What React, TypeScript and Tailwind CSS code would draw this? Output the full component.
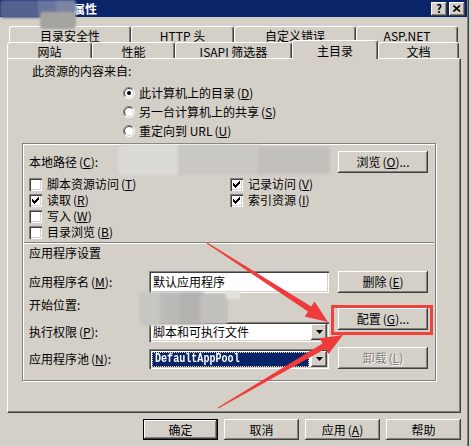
import React from "react";

const raised =
  "bg-[#d4d0c8] shadow-[inset_-1px_-1px_0_#404040,inset_1px_1px_0_#ffffff,inset_-2px_-2px_0_#808080]";
const sunken =
  "shadow-[inset_1px_1px_0_#808080,inset_2px_2px_0_#404040,inset_-1px_-1px_0_#ffffff,inset_-2px_-2px_0_#d4d0c8]";
const grayText = "text-[#808080] [text-shadow:1px_1px_0_#ffffff]";

function Key({ k }: { k: string }) {
  return (
    <span className="ml-[2px]">
      (<span className="underline underline-offset-1">{k}</span>)
    </span>
  );
}

function Btn({ children, className = "", disabled = false }: { children: React.ReactNode; className?: string; disabled?: boolean }) {
  return (
    <div className={`flex items-center justify-center shrink-0 ${raised} ${disabled ? grayText : "text-black"} ${className}`}>
      {children}
    </div>
  );
}

function Tab({ label, w, active = false }: { label: React.ReactNode; w: string; active?: boolean }) {
  return (
    <div
      className={`${w} ${active ? "h-[19px] -mb-px relative z-10 bg-[#d4d0c8]" : "h-[16px]"} shrink-0 flex items-center justify-center pt-[2px] border-l border-t border-r border-l-white border-t-white border-r-[#404040] rounded-t-[3px] shadow-[inset_-1px_0_0_#808080]`}
    >
      {label}
    </div>
  );
}

function Radio({ checked = false }: { checked?: boolean }) {
  return (
    <svg width="12" height="12" viewBox="0 0 12 12" className="shrink-0">
      <circle cx="6" cy="6" r="5.5" fill="#ffffff" />
      <path d="M9.9 2.1 A5.5 5.5 0 0 0 2.1 9.9" stroke="#808080" fill="none" />
      <path d="M9.2 2.8 A4.5 4.5 0 0 0 2.8 9.2" stroke="#404040" fill="none" />
      <path d="M2.1 9.9 A5.5 5.5 0 0 0 9.9 2.1" stroke="#ffffff" fill="none" />
      <path d="M2.8 9.2 A4.5 4.5 0 0 0 9.2 2.8" stroke="#d4d0c8" fill="none" />
      {checked && <circle cx="6" cy="6" r="2" fill="#000000" />}
    </svg>
  );
}

function Check({ checked = false, label }: { checked?: boolean; label: React.ReactNode }) {
  return (
    <div className="flex items-center h-[16px] gap-[5px]">
      <div className={`w-[13px] h-[13px] bg-white shrink-0 flex items-center justify-center ${sunken}`}>
        {checked && (
          <svg width="7" height="7" viewBox="0 0 7 7" shapeRendering="crispEdges">
            <polygon points="0,2 2,4 7,-1 7,2 2,7 0,5" fill="#000000" />
          </svg>
        )}
      </div>
      <span>{label}</span>
    </div>
  );
}

function Combo({ children }: { children: React.ReactNode }) {
  return (
    <div className={`w-[180px] h-[20px] bg-white flex items-center p-[2px] ${sunken}`}>
      <div className="flex-1 h-full flex items-center min-w-0">{children}</div>
      <div className={`w-[16px] h-[16px] flex items-center justify-center ${raised}`}>
        <svg width="7" height="4" viewBox="0 0 7 4">
          <polygon points="0,0 7,0 3.5,4" fill="#000000" />
        </svg>
      </div>
    </div>
  );
}

export default function App() {
  return (
    <div className="relative w-[471px] h-[446px] overflow-hidden bg-[#d4d0c8] flex text-[12px] leading-[14px] text-black font-['Noto_Sans_CJK_SC',sans-serif]">
      <div className="w-[467px] flex flex-col shrink-0">
        {/* title bar */}
        <div className="h-[17px] bg-[#0a246a] flex items-center pr-[2px]">
          <span className="ml-[73px] text-white font-bold">属性</span>
          <div className="ml-auto flex gap-[2px]">
            <div className={`w-[16px] h-[14px] flex items-center justify-center font-bold text-[11px] leading-none ${raised}`}>?</div>
            <div className={`w-[16px] h-[14px] flex items-center justify-center ${raised}`}>
              <svg width="8" height="7" viewBox="0 0 8 7">
                <path d="M0.5 0.5 L7 6.5 M7 0.5 L0.5 6.5" stroke="#000000" strokeWidth="1.6" />
              </svg>
            </div>
          </div>
        </div>

        {/* tabs */}
        <div className="mt-[9px] flex h-[16px] pl-[9px]">
          <Tab w="w-[122px]" label="目录安全性" />
          <Tab w="w-[103px]" label="HTTP 头" />
          <Tab w="w-[122px]" label="自定义错误" />
          <Tab w="w-[102px]" label="ASP.NET" />
        </div>
        <div className="flex items-end h-[16px] pl-[7px]">
          <Tab w="w-[85px]" label="网站" />
          <Tab w="w-[83px]" label="性能" />
          <Tab w="w-[117px]" label="ISAPI 筛选器" />
          <Tab w="w-[86px]" label="主目录" active />
          <Tab w="w-[81px]" label="文档" />
        </div>

        {/* panel */}
        <div className="ml-[7px] w-[454px] h-[355px] border-l border-t border-r border-b border-l-white border-t-white border-r-[#404040] border-b-[#404040] shadow-[inset_-1px_-1px_0_#808080] flex flex-col">
          <div className="mt-[5px] ml-[24px] h-[14px]">此资源的内容来自:</div>

          <div className="mt-[5px] ml-[115px] flex flex-col">
            <div className="h-[19px] flex items-center gap-[4px]">
              <Radio checked />
              <span>此计算机上的目录<Key k="D" /></span>
            </div>
            <div className="h-[19px] flex items-center gap-[4px]">
              <Radio />
              <span>另一台计算机上的共享<Key k="S" /></span>
            </div>
            <div className="h-[19px] flex items-center gap-[4px]">
              <Radio />
              <span>重定向到 URL<Key k="U" /></span>
            </div>
          </div>

          {/* group frame */}
          <div className="ml-[14px] mt-[3px] w-[414px] h-[238px] border border-[#808080] shadow-[1px_1px_0_#ffffff,inset_1px_1px_0_#ffffff] flex flex-col">
            <div className="mt-[7px] h-[22px] flex items-center justify-between pl-[6px] pr-[7px]">
              <span>本地路径<Key k="C" />:</span>
              <Btn className="w-[90px] h-[22px]">浏览<Key k="O" />...</Btn>
            </div>

            <div className="mt-[3px] pl-[6px] grid grid-cols-[201px_1fr]">
              <Check label={<>脚本资源访问<Key k="T" /></>} />
              <Check checked label={<>记录访问<Key k="V" /></>} />
              <Check checked label={<>读取<Key k="R" /></>} />
              <Check checked label={<>索引资源<Key k="I" /></>} />
              <Check label={<>写入<Key k="W" /></>} />
              <div />
              <Check label={<>目录浏览<Key k="B" /></>} />
              <div />
            </div>

            <div className="mt-[2px] mx-[1px] h-[2px] border-t border-b border-t-[#808080] border-b-white" />

            <div className="mt-[2px] h-[14px] pl-[6px]">应用程序设置</div>

            <div className="mt-[11px] pl-[6px] flex">
              <div className="flex flex-col">
                <div className="h-[22px] flex items-center">
                  <span className="w-[120px]">应用程序名<Key k="M" />:</span>
                  <div className={`w-[180px] h-[22px] bg-white flex items-center pl-[4px] ${sunken}`}>默认应用程序</div>
                </div>
                <div className="mt-[1px] h-[22px] flex items-center">
                  <span className="w-[120px]">开始位置:</span>
                </div>
                <div className="mt-[6px] h-[20px] flex items-center">
                  <span className="w-[120px]">执行权限<Key k="P" />:</span>
                  <Combo>
                    <span className="pl-[2px]">脚本和可执行文件</span>
                  </Combo>
                </div>
                <div className="mt-[7px] h-[20px] flex items-center">
                  <span className="w-[120px]">应用程序池<Key k="N" />:</span>
                  <Combo>
                    <div className="ml-px mr-[2px] flex-1 h-[15px] bg-[#0a246a] border border-dotted border-[#e8dc9a] flex items-center pl-[2px] text-white font-bold text-[12px] leading-none font-['Liberation_Mono',monospace] overflow-hidden">
                      <span className="inline-block origin-left scale-x-[0.84]">DefaultAppPool</span>
                    </div>
                  </Combo>
                </div>
              </div>

              <div className="ml-[9px] flex flex-col">
                <Btn className="w-[90px] h-[22px]">删除<Key k="E" /></Btn>
                <Btn className="mt-[15px] w-[90px] h-[22px]">配置<Key k="G" />...</Btn>
                <Btn disabled className="mt-[17px] w-[90px] h-[22px]">卸载<Key k="L" /></Btn>
              </div>
            </div>
          </div>
        </div>

        {/* dialog buttons */}
        <div className="mt-[6px] ml-[143px] flex gap-[6px]">
          <Btn className="w-[75px] h-[21px] border border-black">确定</Btn>
          <Btn className="w-[75px] h-[21px]">取消</Btn>
          <Btn className="w-[75px] h-[21px]">应用<Key k="A" /></Btn>
          <Btn className="w-[75px] h-[21px]">帮助</Btn>
        </div>
      </div>
      <div className="w-px bg-[#808080]" />
      <div className="w-px bg-[#404040]" />
      <div className="flex-1" />

      {/* red highlight box */}
      <div className="absolute left-[331px] top-[305px] w-[102px] h-[30px] border-[3px] border-[#f0413c]" />

      {/* blurred patches and arrows */}
      <svg className="absolute inset-0 pointer-events-none" width="471" height="446" viewBox="0 0 471 446">
        <defs>
          <filter id="soft" x="-20%" y="-20%" width="140%" height="140%">
            <feGaussianBlur stdDeviation="1.2" />
          </filter>
        </defs>
        <g filter="url(#soft)">
          <rect x="0" y="0" width="42" height="18" rx="4" fill="#53628f" />
          <rect x="38" y="0" width="22" height="14" fill="#6b76a0" />
          <rect x="56" y="0" width="20" height="12" rx="3" fill="#7d85a6" />
          <rect x="40" y="12" width="36" height="17" rx="4" fill="#a6a4a0" />
          <rect x="118" y="145" width="64" height="30" rx="6" fill="#dcdad6" />
          <rect x="178" y="145" width="84" height="30" fill="#cac8c4" />
          <rect x="258" y="146" width="72" height="28" rx="4" fill="#c2c0bc" />
          <rect x="139" y="292" width="24" height="34" rx="3" fill="#c8c6c2" />
          <rect x="160" y="292" width="22" height="33" fill="#bcbab6" />
          <rect x="180" y="292" width="24" height="33" fill="#b4b2ae" />
          <rect x="200" y="294" width="28" height="30" rx="3" fill="#c2c0bc" />
          <rect x="226" y="291" width="14" height="8" fill="#e4e2de" />
        </g>
        <polygon
          points="206.7,243.4 308,311.5 304.7,316.5 328,322 314.5,301.5 311.2,306.5 207.3,242.6"
          fill="#ef3b3b"
        />
        <polygon
          points="218.25,408.43 325.5,348.7 328.5,353.9 343,335 319.5,338.3 322.5,343.5 217.75,407.57"
          fill="#ef3b3b"
        />
      </svg>
    </div>
  );
}
